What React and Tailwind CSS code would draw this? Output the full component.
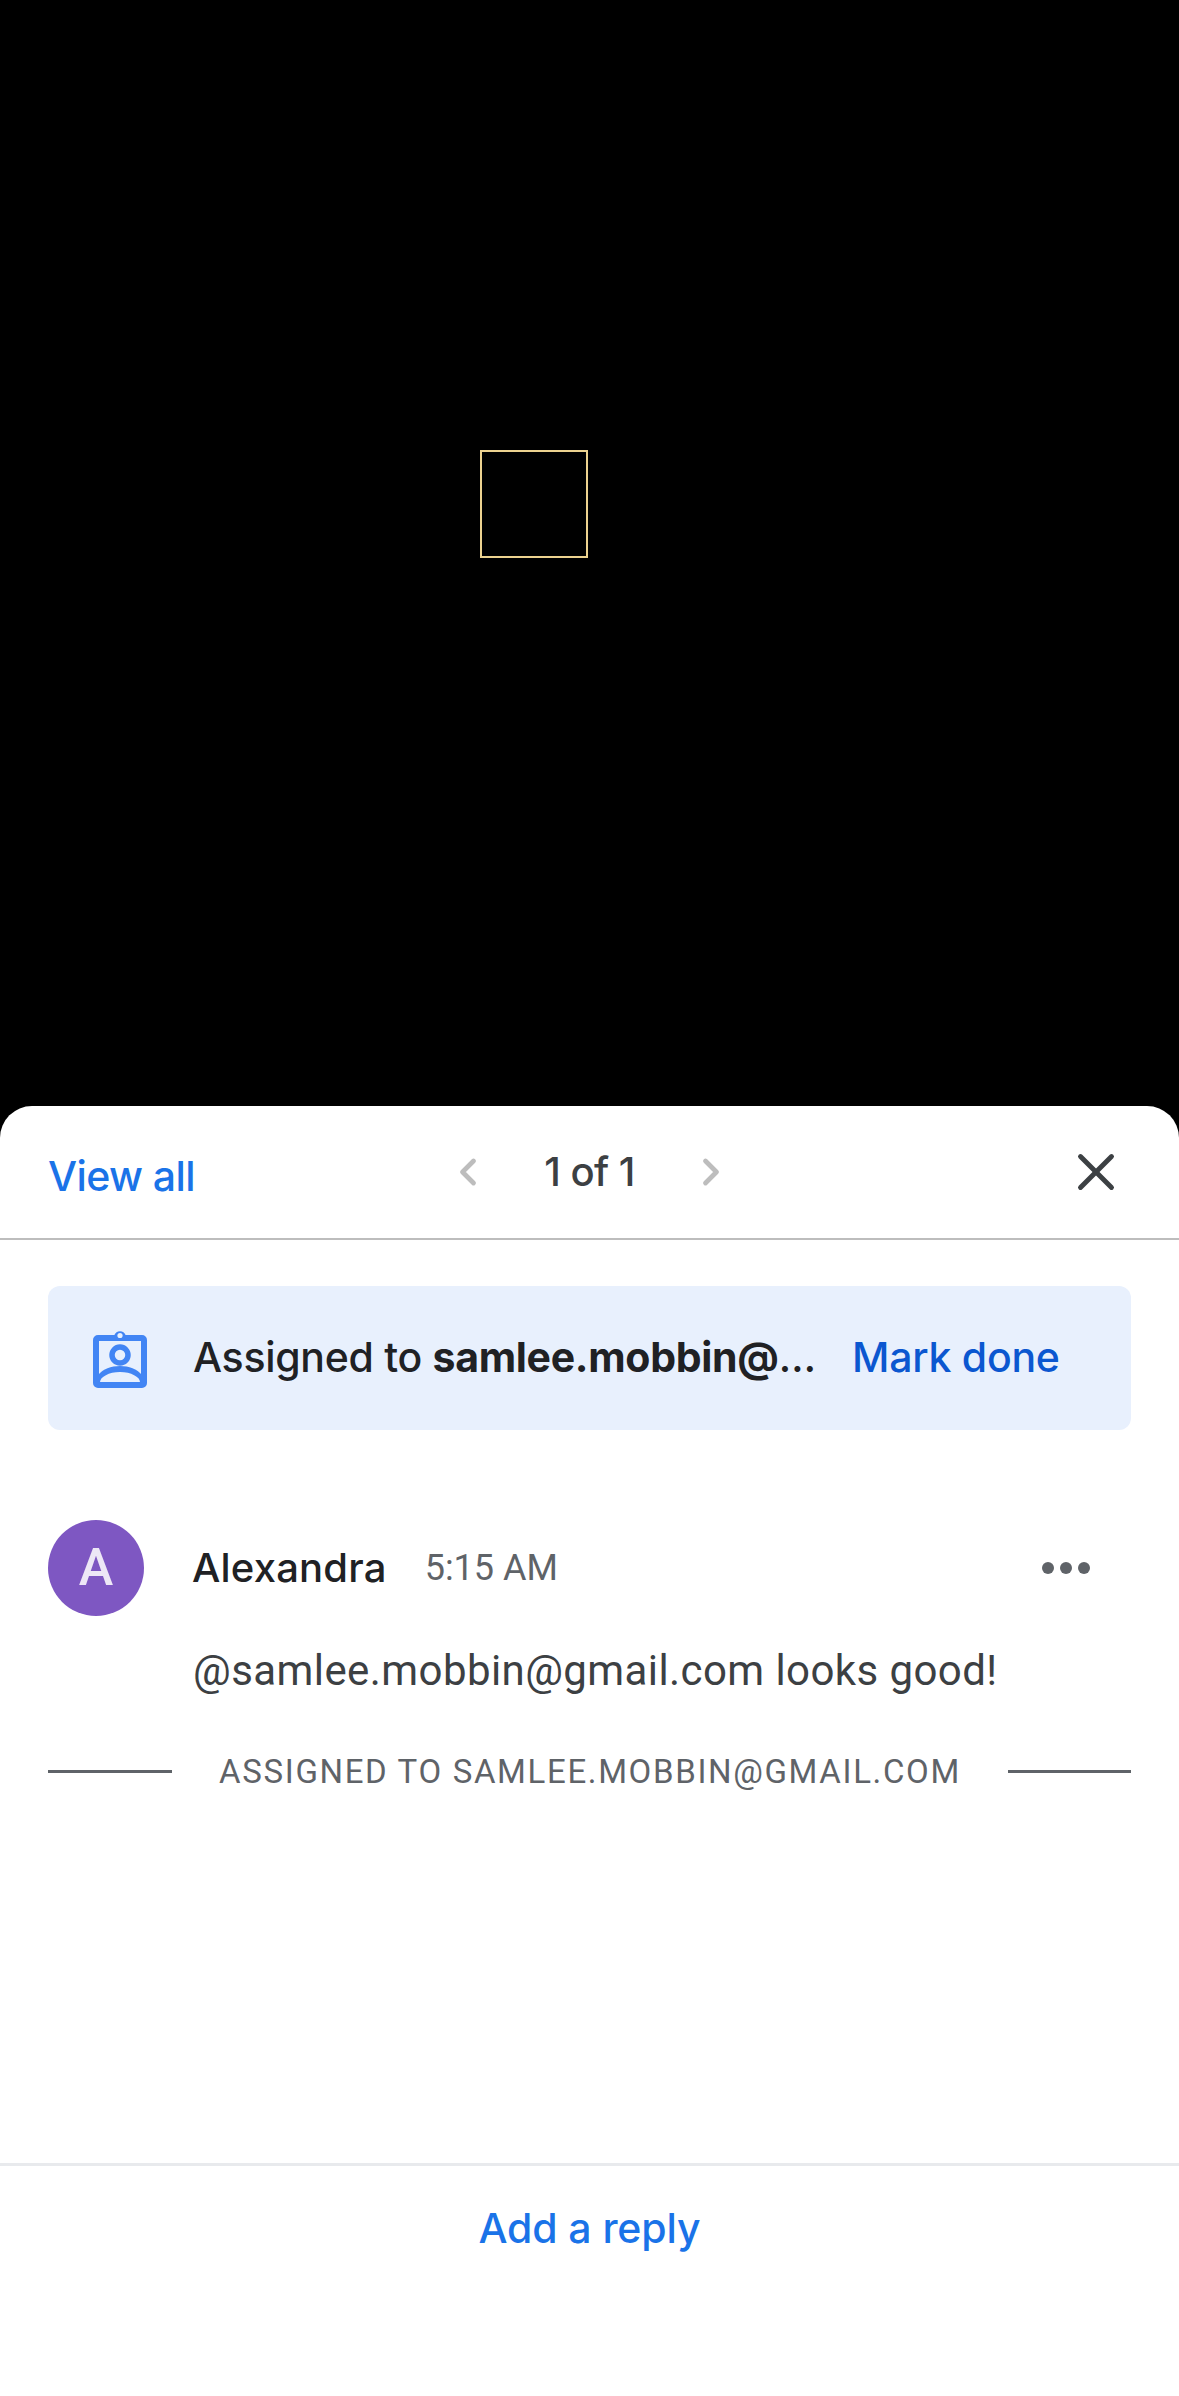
import { ChevronLeft, ChevronRight, X } from 'lucide-react';

const googleSans = "font-['Inter','Noto_Sans',sans-serif]";

function BadgeIcon() {
  return (
    <svg width="54" height="60" viewBox="0 0 54 60" className="shrink-0">
      <path
        d="M5 7h16.4a6 6 0 0 1 11.2 0H49a5 5 0 0 1 5 5v43a5 5 0 0 1-5 5H5a5 5 0 0 1-5-5V12a5 5 0 0 1 5-5Z"
        fill="#4285f4"
      />
      <rect x="6" y="13" width="42" height="41" fill="#e8f0fd" />
      <circle cx="27" cy="7.5" r="2.6" fill="#e8f0fd" />
      <circle cx="27" cy="27" r="8" fill="none" stroke="#4285f4" strokeWidth="5.5" />
      <path d="M5 47c5-6 13-9 22-9s17 3 22 9v7H5Z" fill="#4285f4" />
      <path d="M7 54c0-5 9-10 20-10s20 5 20 10Z" fill="#e8f0fd" />
    </svg>
  );
}

export default function App() {
  return (
    <div className="w-[1179px] h-[2396px] bg-black flex flex-col overflow-hidden">
      <div className="h-[1106px] shrink-0 pl-[480px] pt-[450px]">
        <div className="w-[108px] h-[108px] border-2 border-[#ecd28f]" />
      </div>

      <div className="flex-1 flex flex-col bg-white rounded-t-[32px]">
        <div className="h-[134px] shrink-0 grid grid-cols-[1fr_auto_1fr] items-center border-b-2 border-[#bdbdbd]">
          <button className={`pl-12 pt-[8px] text-left text-[41px] leading-none font-medium tracking-[-0.6px] text-[#1a73e8] ${googleSans}`}>
            View all
          </button>
          <div className="flex items-center">
            <ChevronLeft size={44} strokeWidth={2.6} className="text-[#bdbdbd]" />
            <span className={`mx-[54px] text-[40px] leading-none font-medium tracking-[-0.6px] text-[#3c4043] ${googleSans}`}>
              1 of 1
            </span>
            <ChevronRight size={44} strokeWidth={2.6} className="text-[#bdbdbd]" />
          </div>
          <div className="flex justify-end pr-[52px]">
            <X size={62} strokeWidth={1.9} className="text-[#3c4043]" />
          </div>
        </div>

        <div className="mx-12 mt-[46px] h-[144px] shrink-0 flex items-center pl-[45px] bg-[#e8f0fd] rounded-[12px]">
          <BadgeIcon />
          <p className={`ml-[46px] w-[626px] truncate text-[41px] leading-normal font-medium tracking-[-0.3px] text-[#202124] ${googleSans}`}>
            Assigned to <span className="font-bold">samlee.mobbin@gmail.com</span>
          </p>
          <button className={`ml-[33px] text-[41px] leading-normal font-medium tracking-[-0.25px] text-[#0b57d0] ${googleSans}`}>
            Mark done
          </button>
        </div>

        <div className="mt-[90px] ml-12 h-[96px] shrink-0 flex items-center">
          <div className="w-[96px] h-[96px] rounded-full bg-[#7e57c2] flex items-center justify-center font-['Roboto',sans-serif] font-medium text-[52px] text-[#ede7f6]">
            A
          </div>
          <span className={`ml-[48px] text-[40px] leading-none font-medium tracking-[0.2px] text-[#202124] ${googleSans}`}>
            Alexandra
          </span>
          <span className="ml-[38px] font-['Roboto',sans-serif] text-[36px] leading-none text-[#5f6368]">5:15 AM</span>
          <div className="ml-auto mr-[89px] flex gap-[6px]">
            <span className="w-3 h-3 rounded-full bg-[#5f6368]" />
            <span className="w-3 h-3 rounded-full bg-[#5f6368]" />
            <span className="w-3 h-3 rounded-full bg-[#5f6368]" />
          </div>
        </div>

        <p className="mt-[30px] pl-[193px] font-['Roboto',sans-serif] text-[42px] leading-[50px] tracking-[0.42px] text-[#3c4043]">
          @samlee.mobbin@gmail.com looks good!
        </p>

        <div className="mt-[55px] mx-12 h-[40px] shrink-0 flex items-center justify-between">
          <span className="w-[124px] h-[3px] bg-[#5f6368]" />
          <span className="font-['Roboto',sans-serif] text-[33px] leading-none tracking-[1.65px] text-[#5f6368]">
            ASSIGNED TO SAMLEE.MOBBIN@GMAIL.COM
          </span>
          <span className="w-[123px] h-[3px] bg-[#5f6368]" />
        </div>

        <div className="flex-1" />

        <div className="h-[233px] shrink-0 border-t-[3px] border-[#e8eaed] flex justify-center pt-[32px]">
          <button className={`h-fit text-[41px] leading-[60px] font-medium tracking-[-0.1px] text-[#1a73e8] ${googleSans}`}>
            Add a reply
          </button>
        </div>
      </div>
    </div>
  );
}
